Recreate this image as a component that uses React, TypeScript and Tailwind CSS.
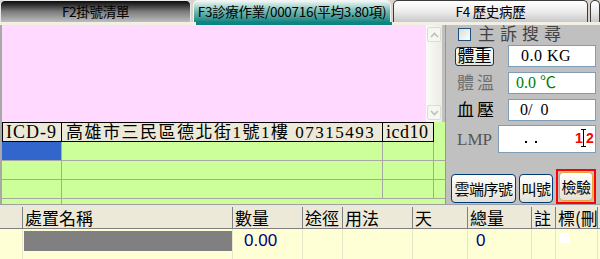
const serif = "font-['Liberation_Serif','Noto_Sans_CJK_TC',serif]";
const sans = "font-['Noto_Sans_CJK_TC','Liberation_Sans',sans-serif]";

function Tab({ label, kind, width }: { label: string; kind: 'dark' | 'active' | 'light'; width: string }) {
  const bg =
    kind === 'dark'
      ? 'bg-gradient-to-b from-[#0c0c0c] via-[#7c7c7c] to-[#bdbdbd] border-[#e8e8e8]'
      : kind === 'active'
        ? 'bg-gradient-to-b from-[#eef8f6] via-[#6fb9b3] to-[#0a8582] border-[#f4f4f4]'
        : 'bg-gradient-to-b from-[#ffffff] via-[#ececec] to-[#c9c9c9] border-[#3a3a3a]';
  return (
    <div
      className={`${width} h-[22px] ${bg} border border-b-0 rounded-t-[5px] flex items-center justify-center text-[13.5px] tracking-[-0.3px] text-black ${sans} leading-none whitespace-nowrap overflow-hidden`}
    >
      {label}
    </div>
  );
}

function Field({ children, className = '' }: { children?: React.ReactNode; className?: string }) {
  return (
    <div className={`bg-white border border-[#7f9db9] flex items-center ${className}`}>{children}</div>
  );
}

function XpButton({ label, className = '' }: { label: string; className?: string }) {
  return (
    <div
      className={`h-[29px] rounded-[4px] border border-[#003c74] bg-gradient-to-b from-white to-[#e3e1d6] flex items-center justify-center text-[15px] tracking-[-0.5px] text-black ${sans} leading-none whitespace-nowrap ${className}`}
    >
      {label}
    </div>
  );
}

export default function App() {
  const gridRows = [0, 1, 2];
  const bottomCols = [
    { w: 'w-[23px]', label: '' },
    { w: 'w-[210px]', label: '處置名稱' },
    { w: 'w-[70px]', label: '數量' },
    { w: 'w-[40px]', label: '途徑' },
    { w: 'w-[70px]', label: '用法' },
    { w: 'w-[55px]', label: '天' },
    { w: 'w-[64px]', label: '總量' },
    { w: 'w-[24px]', label: '註' },
    { w: 'w-[42px]', label: '標(刪' },
  ];

  return (
    <div className={`w-[600px] h-[259px] overflow-hidden bg-[#c0c0c0] flex flex-col ${sans}`}>
      {/* tab strip */}
      <div className="h-[22px] flex items-end gap-[2px] bg-[#d8d4c8] shrink-0">
        <Tab label="F2掛號清單" kind="dark" width="w-[192px]" />
        <Tab label="F3診療作業/000716(平均3.80項)" kind="active" width="w-[199px]" />
        <Tab label="F4 歷史病歷" kind="light" width="w-[196px]" />
        <Tab label="" kind="light" width="w-[10px]" />
      </div>
      <div className="h-[3px] flex shrink-0">
        <div className="w-[196px] bg-[#f2f0e4]" />
        <div className="w-[196px] bg-[#0a8582]" />
        <div className="flex-1 bg-[#f2f0e4]" />
      </div>

      {/* main area */}
      <div className="h-[179px] flex shrink-0">
        {/* left panel */}
        <div className="w-[450px] flex flex-col border-l-2 border-[#a8a8a8] bg-[#ccff99]">
          <div className="h-[97px] flex">
            <div className="flex-1 bg-[#ffd9ff]" />
            <div className="w-[16px] bg-gradient-to-r from-[#fbfbf8] to-[#ecebe4] flex flex-col justify-between py-[2px]">
              <div className="h-[15px] mx-[1px] rounded-[2px] border border-[#dcdcd2] bg-[#f6f6f2] flex items-center justify-center">
                <svg width="9" height="6" viewBox="0 0 9 6">
                  <path d="M1 5 L4.5 1.5 L8 5" fill="none" stroke="#c0c0ba" strokeWidth="1.6" />
                </svg>
              </div>
              <div className="h-[15px] mx-[1px] rounded-[2px] border border-[#dcdcd2] bg-[#f6f6f2] flex items-center justify-center">
                <svg width="9" height="6" viewBox="0 0 9 6">
                  <path d="M1 1 L4.5 4.5 L8 1" fill="none" stroke="#c0c0ba" strokeWidth="1.6" />
                </svg>
              </div>
            </div>
            <div className="w-[3px] bg-[#c0c0c0]" />
          </div>
          {/* grid header */}
          <div className={`h-[20px] flex ${serif} leading-none text-black`}>
            <div className="w-[60px] bg-[#ece9d8] border border-black flex items-center pl-[3px] text-[18px] tracking-[1px]">ICD-9</div>
            <div className="w-[321px] bg-[#ece9d8] border border-l-0 border-black flex items-center pl-[4px] text-[17px] tracking-[1.5px] whitespace-nowrap">
              高雄市三民區德北街1號1樓 07315493
            </div>
            <div className="w-[51px] bg-[#ece9d8] border border-l-0 border-black flex items-center pl-[3px] text-[18px] tracking-[0.5px]">icd10</div>
            <div className="flex-1" />
          </div>
          {gridRows.map((r) => (
            <div key={r} className="h-[19px] flex border-b border-[#a8a8a0]">
              <div className={`w-[60px] border-r border-[#a8a8a0] ${r === 0 ? 'bg-[#3366cc]' : ''}`} />
              <div className="w-[321px] border-r border-[#a8a8a0]" />
              <div className="w-[51px] border-r border-[#a8a8a0]" />
              <div className="flex-1" />
            </div>
          ))}
          <div className="flex-1 flex">
            <div className="w-[60px] border-r border-[#a8a8a0]" />
            <div className="flex-1" />
          </div>
        </div>

        {/* right panel */}
        <div className="flex-1 border-l border-[#7f9db9] flex flex-col pl-[9px] pr-[4px] pt-[2px]">
          <div className="h-[15px] flex items-center gap-[7px] pl-[3px]">
            <div className="w-[13px] h-[13px] border border-[#1c5180] bg-gradient-to-br from-[#dcdcd4] to-white" />
            <span className={`${serif} text-[17px] tracking-[5px] text-[#444] leading-none`}>主訴搜尋</span>
          </div>
          <div className="mt-[3px] h-[22px] flex items-center justify-between">
            <div className={`w-[39px] h-[19px] rounded-[3px] border border-[#003c74] bg-gradient-to-b from-white to-[#e6e4da] flex items-center justify-center text-[17px] ${serif} leading-none`}>
              體重
            </div>
            <Field className={`w-[88px] h-[22px] pl-[12px] ${serif} text-[16px] text-black tracking-[0.5px]`}>0.0 KG</Field>
          </div>
          <div className="mt-[5px] h-[22px] flex items-center justify-between">
            <span className={`${serif} text-[17px] tracking-[3px] text-[#707070] pl-[2px] leading-none`}>體溫</span>
            <Field className={`w-[88px] h-[22px] pl-[7px] ${serif} text-[16px] text-[#008000]`}>0.0 ℃</Field>
          </div>
          <div className="mt-[5px] h-[22px] flex items-center justify-between">
            <span className={`${serif} text-[17px] tracking-[3px] text-black pl-[2px] leading-none`}>血壓</span>
            <Field className={`w-[88px] h-[22px] pl-[11px] ${serif} text-[16px] text-black whitespace-pre`}>0/  0</Field>
          </div>
          <div className="mt-[4px] h-[28px] flex items-center justify-between">
            <span className={`${serif} text-[17px] text-[#555] pl-[2px] leading-none`}>LMP</span>
            <Field className="w-[98px] h-[28px] relative">
              <span className="absolute left-[26px] top-[15px] w-[2px] h-[2px] bg-black" />
              <span className="absolute left-[36px] top-[15px] w-[2px] h-[2px] bg-black" />
              <span className="absolute left-[76px] top-[5px] text-[14px] font-bold text-[#ff0000] font-['Liberation_Sans',sans-serif] leading-none">1</span>
              <span className="absolute left-[84px] top-[3px] w-[1px] h-[18px] bg-black" />
              <span className="absolute left-[82px] top-[3px] w-[5px] h-[1px] bg-black" />
              <span className="absolute left-[82px] top-[20px] w-[5px] h-[1px] bg-black" />
              <span className="absolute left-[87px] top-[5px] text-[14px] font-bold text-[#ff0000] font-['Liberation_Sans',sans-serif] leading-none">2</span>
            </Field>
          </div>
          <div className="flex-1" />
          <div className="flex items-end gap-[3px] -ml-[4px]">
            <XpButton label="雲端序號" className="w-[65px] mb-[1px]" />
            <XpButton label="叫號" className="w-[34px] mb-[1px]" />
            <div className="border-2 border-[#ff0000] p-[1px]">
              <XpButton label="檢驗" className="w-[34px] h-[28px] border-[#e8a33c]" />
            </div>
          </div>
        </div>
      </div>

      {/* separator */}
      <div className="h-[3px] bg-[#e8e8e0] border-t border-[#a0a0a0] shrink-0" />

      {/* bottom grid */}
      <div className="flex-1 flex flex-col">
        <div className="h-[22px] flex bg-[#ece9d8] border-b border-[#808080]">
          {bottomCols.map((c, i) => (
            <div
              key={i}
              className={`${c.w} h-full border-r border-[#808080] flex items-center pl-[2px] text-[17px] text-black leading-none whitespace-nowrap ${i === 8 ? 'overflow-hidden' : ''}`}
            >
              {c.label}
            </div>
          ))}
          <div className="flex-1" />
        </div>
        <div className="flex-1 flex bg-[#ffffd5]">
          {bottomCols.map((c, i) => (
            <div key={i} className={`${c.w} h-full border-r border-[#e6e6c8] relative`}>
              {i === 1 && <div className="absolute left-[1px] right-0 top-[2px] h-[20px] bg-[#808080]" />}
              {i === 2 && (
                <span className="absolute left-[11px] top-[3px] text-[17px] text-[#000080] font-['Liberation_Sans',sans-serif] leading-none">
                  0.00
                </span>
              )}
              {i === 6 && (
                <span className="absolute left-[8px] top-[3px] text-[17px] text-[#000080] font-['Liberation_Sans',sans-serif] leading-none">
                  0
                </span>
              )}
              {i === 8 && <div className="absolute left-[4px] top-[4px] w-[10px] h-[10px] bg-white" />}
            </div>
          ))}
          <div className="flex-1" />
        </div>
      </div>
    </div>
  );
}
